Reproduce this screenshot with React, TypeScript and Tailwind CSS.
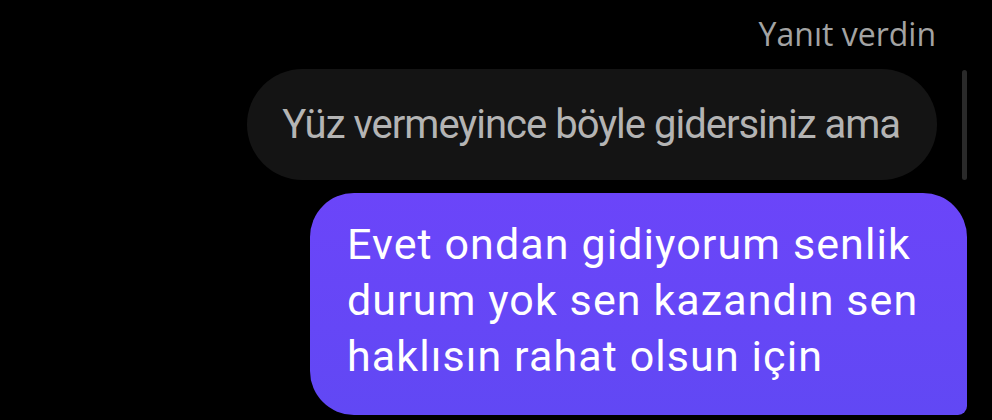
import React from 'react';

const App: React.FC = () => {
  return (
    <div className="w-full h-[420px] bg-black overflow-hidden font-['Roboto','Noto_Sans',sans-serif]">
      <div className="flex flex-col items-end pr-[25px] pt-[14px]">
        {/* reply label */}
        <div className="mr-[31px] font-['Open_Sans',sans-serif] text-[32px] leading-[40px] text-[#a3a3a3]">Yanıt verdin</div>

        {/* quoted message + scroll indicator */}
        <div className="mt-[15px] flex items-center gap-[25px]">
          <div className="h-[111px] flex items-center rounded-full bg-[#141414] pl-[35px] pr-[37px]">
            <span className="text-[40px] text-[#b4b4b4] tracking-[-1px]">Yüz vermeyince böyle gidersiniz ama</span>
          </div>
          <div className="w-[5px] h-[110px] rounded-full bg-[#2a2a2a]" />
        </div>

        {/* own message */}
        <div className="mt-[13px] w-[657px] h-[222px] rounded-[44px] rounded-br-[9px] bg-gradient-to-b from-[#6b45f9] to-[#6148f4] pl-[37px] pr-[20px] pt-[23px]">
          <p className="text-[43px] leading-[56px] tracking-[1.1px] text-white">
            Evet ondan gidiyorum senlik durum yok sen kazandın sen haklısın rahat olsun için
          </p>
        </div>
      </div>
    </div>
  );
};

export default App;
